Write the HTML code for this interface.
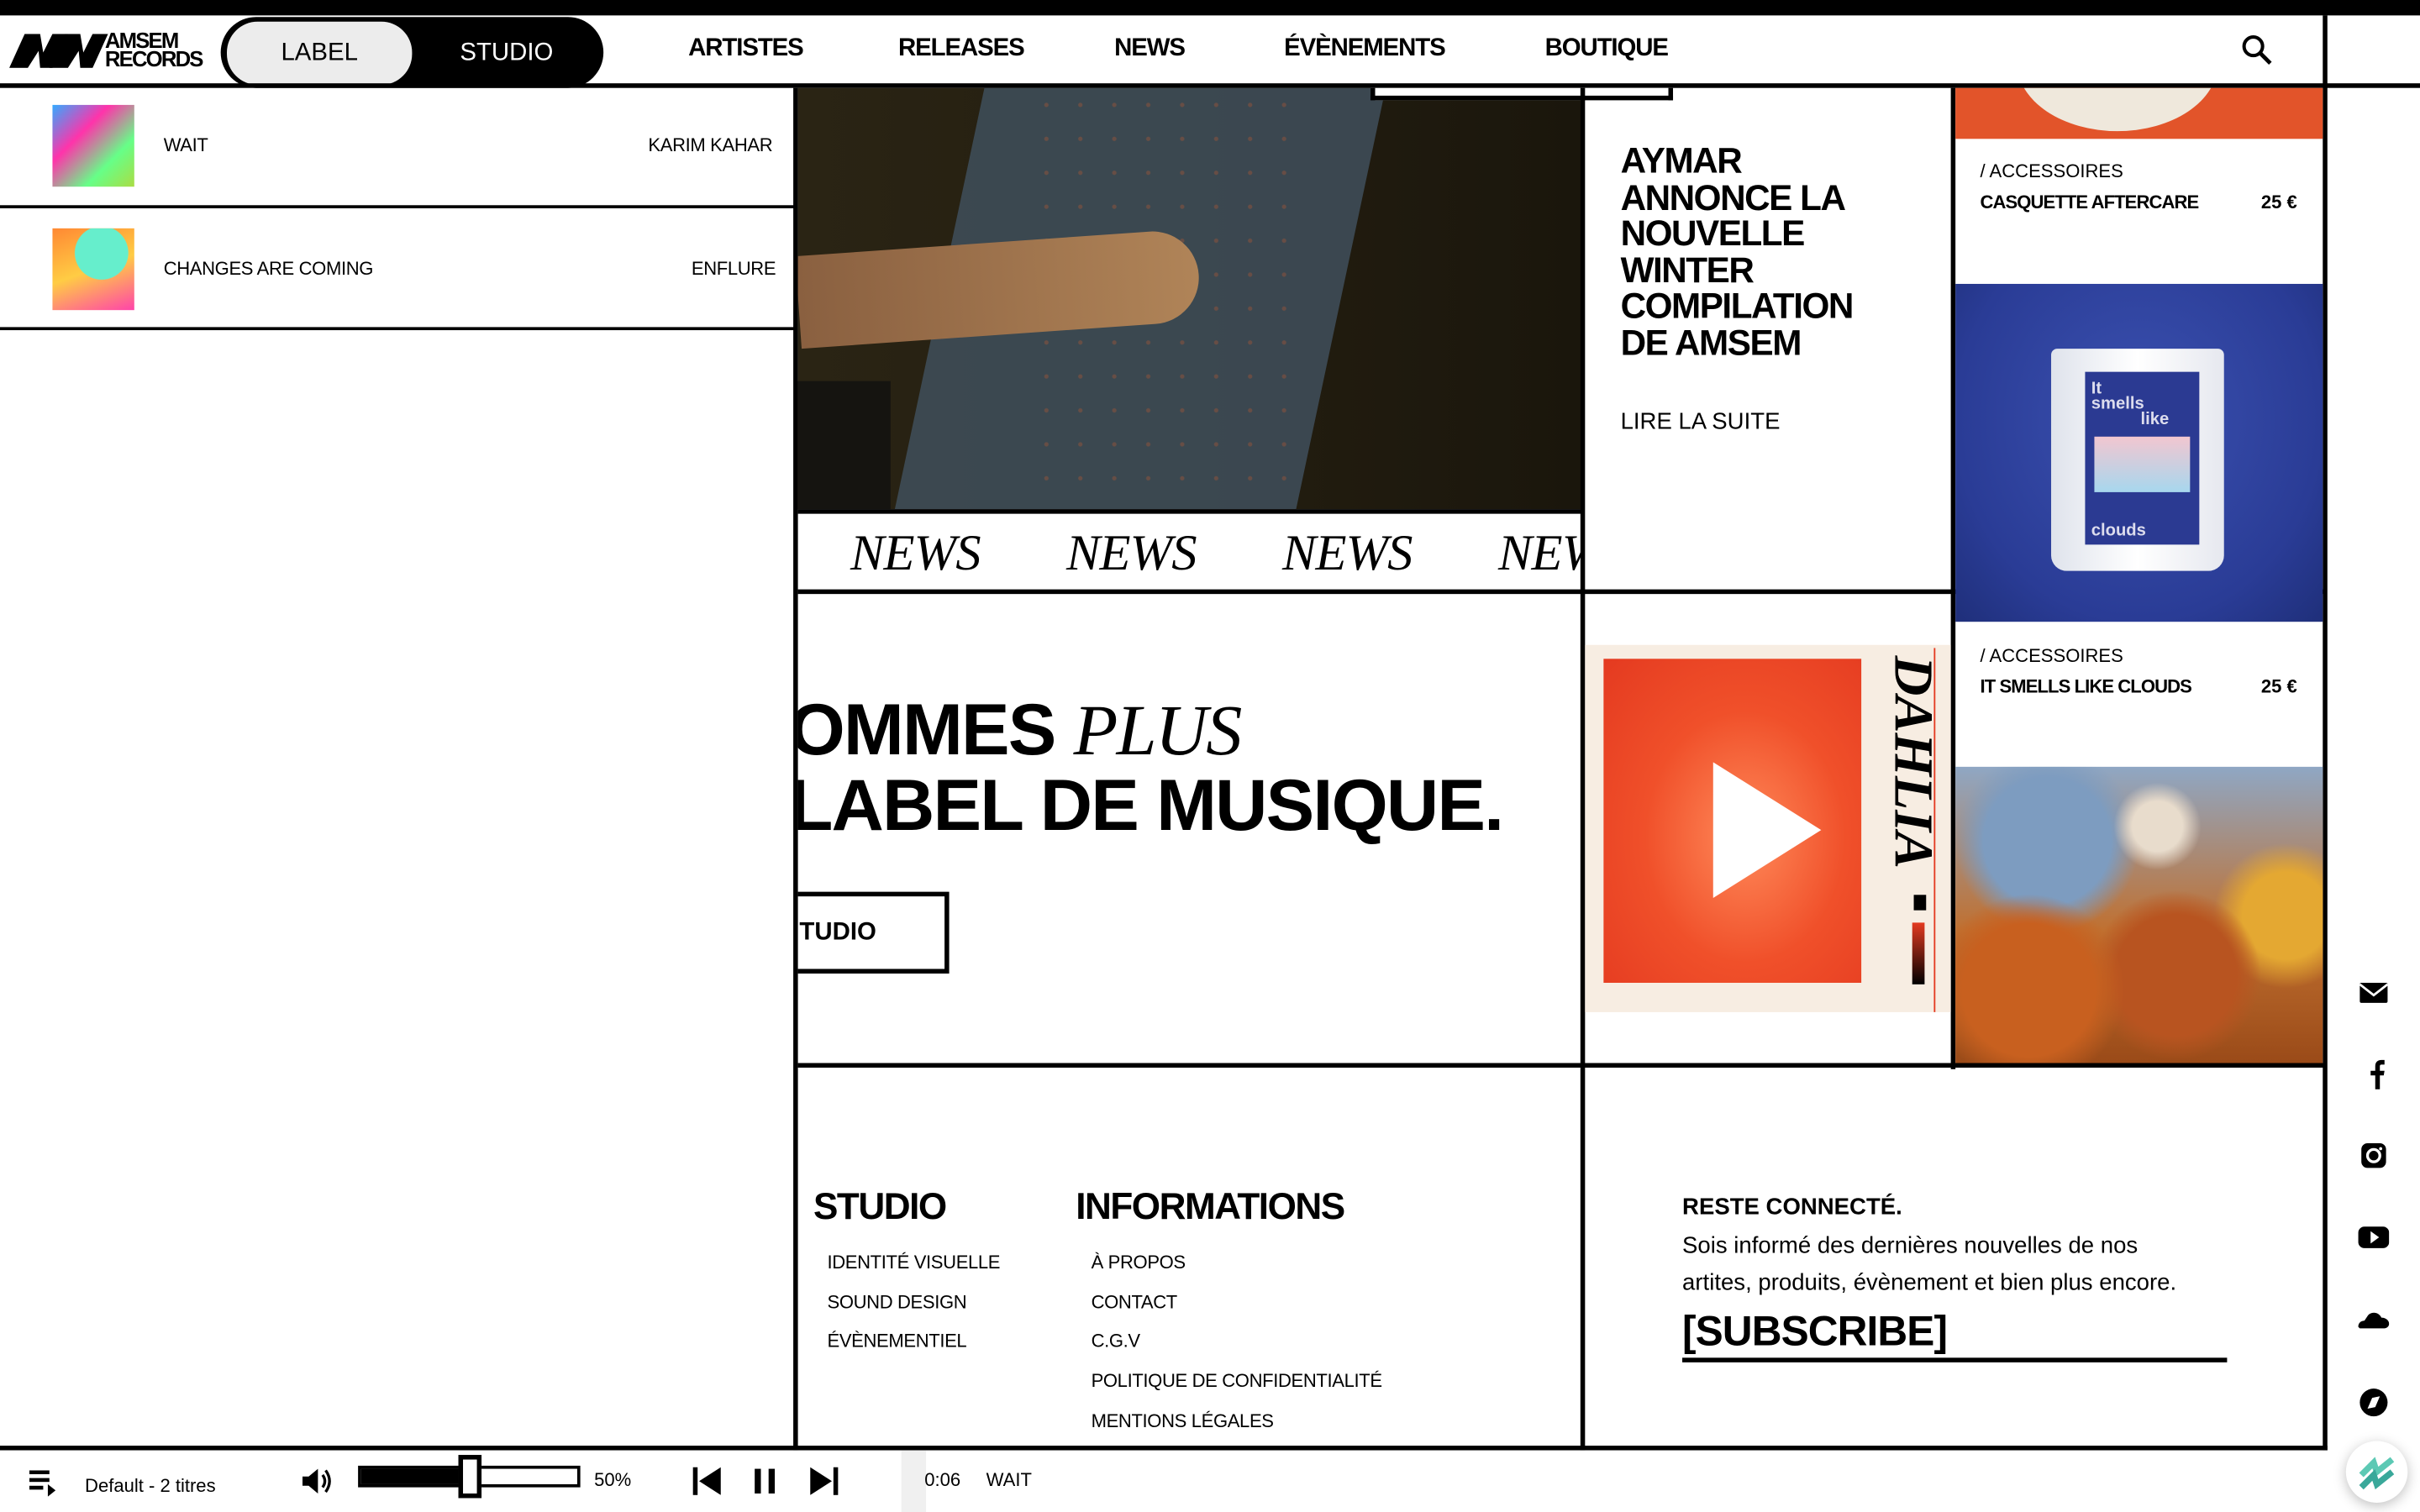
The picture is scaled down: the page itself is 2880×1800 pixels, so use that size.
<!DOCTYPE html>
<html><head><meta charset="utf-8"><style>
*{margin:0;padding:0;box-sizing:border-box}
html,body{width:2880px;height:1800px;overflow:hidden;background:#fff}
#s{position:absolute;left:0;top:0;width:1568px;height:980px;transform:scale(1.836735);transform-origin:0 0;font-family:"Liberation Sans",sans-serif;color:#000}
.a{position:absolute}
.nav{font-weight:bold;font-size:16px;top:23px;letter-spacing:-0.6px}
.k{background:#000}
.t{font-size:12px;letter-spacing:-0.2px}
.fl{font-size:12px;position:absolute;letter-spacing:-0.2px}
</style></head><body><div id="s">
<div class="a k" style="left:0;top:0;width:1568px;height:10px"></div>
<!-- header -->
<svg class="a" style="left:6px;top:22px" width="64" height="22" viewBox="0 0 64 22"><path d="M0 22L10 0H20L22 12L28 0H38L28 22H20L19 11L12 22Z"/><path d="M26 22L36 0H46L48 12L54 0H64L54 22H46L45 11L38 22Z"/></svg>
<div class="a" style="left:68px;top:20px;font-weight:bold;font-size:14px;line-height:12px;letter-spacing:-1px">AMSEM<br>RECORDS</div>
<div class="a k" style="left:143px;top:11px;width:248px;height:46px;border-radius:23px"></div>
<div class="a" style="left:147px;top:14px;width:120px;height:41px;border-radius:20px;background:#ececec;text-align:center;line-height:42px;font-size:16px">LABEL</div>
<div class="a" style="left:298px;top:26px;color:#fff;font-size:16px">STUDIO</div>
<div class="a nav" style="left:446px">ARTISTES</div>
<div class="a nav" style="left:582px">RELEASES</div>
<div class="a nav" style="left:722px">NEWS</div>
<div class="a nav" style="left:832px">ÉVÈNEMENTS</div>
<div class="a nav" style="left:1001px">BOUTIQUE</div>
<svg class="a" style="left:1452px;top:22px" width="22" height="22" viewBox="0 0 22 22"><circle cx="8" cy="8" r="6" fill="none" stroke="#000" stroke-width="2.2"/><path d="M12.5 12.5L19 19" stroke="#000" stroke-width="2.6"/></svg>
<div class="a k" style="left:0;top:54px;width:1568px;height:3px"></div>
<div class="a k" style="left:1505px;top:10px;width:3px;height:930px"></div>
<!-- left list -->
<div class="a" style="left:34px;top:68px;width:53px;height:53px;background:linear-gradient(135deg,#3af 0%,#f3a 35%,#6f8 70%,#ad4 100%)"></div>
<div class="a t" style="left:106px;top:87px">WAIT</div>
<div class="a t" style="left:420px;top:87px">KARIM KAHAR</div>
<div class="a k" style="left:0;top:133px;width:515px;height:2px"></div>
<div class="a" style="left:34px;top:148px;width:53px;height:53px;background:radial-gradient(circle at 60% 30%,#6ec 0 35%,transparent 36%),linear-gradient(160deg,#f83,#fc4 50%,#f4a)"></div>
<div class="a t" style="left:106px;top:167px">CHANGES ARE COMING</div>
<div class="a t" style="left:448px;top:167px">ENFLURE</div>
<div class="a k" style="left:0;top:212px;width:515px;height:2px"></div>
<div class="a k" style="left:514px;top:57px;width:3px;height:883px"></div>
<!-- photo -->
<div class="a" style="left:517px;top:57px;width:508px;height:273px;overflow:hidden;background:linear-gradient(90deg,#2a2414,#241e10 50%,#1a160c)">
<div class="a" style="left:90px;top:-20px;width:260px;height:330px;background:#3e4c58;transform:skewX(-12deg);opacity:.9"></div>
<div class="a" style="left:150px;top:0;width:180px;height:280px;background:radial-gradient(circle,#7a5040 0 8%,transparent 10%) 0 0/22px 22px;opacity:.7"></div>
<div class="a" style="left:0;top:100px;width:260px;height:60px;background:linear-gradient(90deg,#8a6040,#b08458);border-radius:0 30px 30px 0;transform:rotate(-4deg)"></div>
<div class="a" style="left:0;top:190px;width:60px;height:83px;background:#151410"></div>
</div>
<div class="a" style="left:888px;top:57px;width:196px;height:8px;border:3px solid #000;border-top:none;background:#fff"></div>
<div class="a k" style="left:517px;top:330px;width:508px;height:3px"></div>
<div class="a" style="left:517px;top:333px;width:508px;height:50px;overflow:hidden;font-family:'Liberation Serif',serif;font-style:italic;font-size:33px;line-height:52px;white-space:nowrap;letter-spacing:-0.5px;padding-left:34px;word-spacing:48px">NEWS NEWS NEWS NEWS</div>
<div class="a k" style="left:517px;top:382px;width:990px;height:3px"></div>
<div class="a k" style="left:1024px;top:57px;width:3px;height:883px"></div>
<!-- article -->
<div class="a" style="left:1050px;top:93px;font-weight:bold;font-size:23px;line-height:23.5px;letter-spacing:-0.8px">AYMAR<br>ANNONCE LA<br>NOUVELLE<br>WINTER<br>COMPILATION<br>DE AMSEM</div>
<div class="a" style="left:1050px;top:265px;font-size:15px">LIRE LA SUITE</div>
<div class="a k" style="left:1264px;top:57px;width:3px;height:636px"></div>
<!-- shop -->
<div class="a" style="left:1267px;top:57px;width:238px;height:33px;background:#e2542a;overflow:hidden"><div style="position:absolute;left:40px;top:-60px;width:130px;height:88px;border-radius:50%;background:#efe8dc"></div></div>
<div class="a" style="left:1283px;top:104px;font-size:12px">/ ACCESSOIRES</div>
<div class="a" style="left:1283px;top:124px;font-size:12px;font-weight:bold;letter-spacing:-0.5px">CASQUETTE AFTERCARE</div>
<div class="a" style="left:1465px;top:124px;font-size:12px;font-weight:bold">25 €</div>
<div class="a" style="left:1267px;top:184px;width:238px;height:219px;background:radial-gradient(ellipse at 50% 40%,#3b51b0,#2a3c96 70%,#1f2f7a)"></div>
<div class="a" style="left:1329px;top:226px;width:112px;height:144px;background:linear-gradient(90deg,#dfe3ec,#fff 50%,#e6e8ef);border-radius:4px 4px 10px 10px"></div>
<div class="a" style="left:1351px;top:241px;width:74px;height:112px;background:#2b3a92;color:#dde;font-size:11px;font-weight:bold;line-height:10px;padding:6px 4px">It<br>smells<br><span style="padding-left:32px">like</span><div style="margin:6px 2px;height:36px;background:linear-gradient(#f2c6d0,#a7d7ee)"></div><div style="margin-top:20px">clouds</div></div>
<div class="a" style="left:1283px;top:418px;font-size:12px">/ ACCESSOIRES</div>
<div class="a" style="left:1283px;top:438px;font-size:12px;font-weight:bold;letter-spacing:-0.5px">IT SMELLS LIKE CLOUDS</div>
<div class="a" style="left:1465px;top:438px;font-size:12px;font-weight:bold">25 €</div>
<div class="a" style="left:1267px;top:497px;width:238px;height:193px;background:radial-gradient(circle at 20% 75%,#c8601f 0 18%,transparent 26%),radial-gradient(circle at 60% 70%,#b85420 0 20%,transparent 28%),radial-gradient(circle at 90% 50%,#e4a832 0 12%,transparent 20%),radial-gradient(circle at 55% 20%,#e8dccc 0 8%,transparent 14%),radial-gradient(circle at 25% 25%,#7d9cc0 0 18%,transparent 26%),linear-gradient(#8fa7c4,#c07030 55%,#9a4a18)"></div>
<!-- hero -->
<div class="a" style="left:517px;top:385px;width:507px;height:305px;overflow:hidden">
<div class="a" style="left:-6px;top:64px;font-weight:bold;font-size:47px;line-height:48px;white-space:nowrap;letter-spacing:-1px">OMMES <span style="font-family:'Liberation Serif',serif;font-style:italic;font-weight:normal">PLUS</span><br>LABEL DE MUSIQUE.</div>
<div class="a" style="left:-10px;top:193px;width:108px;height:53px;border:3px solid #000;font-weight:bold;font-size:16px;line-height:47px;padding-left:8px">TUDIO</div>
</div>
<!-- video -->
<div class="a" style="left:1027px;top:418px;width:237px;height:238px;background:#f7ede2"></div>
<div class="a" style="left:1039px;top:427px;width:167px;height:210px;background:radial-gradient(ellipse at 55% 55%,#ff8a5a,#f0502a 50%,#e43a20)"></div>
<svg class="a" style="left:1108px;top:492px" width="74" height="92"><path d="M2 2L72 46L2 90Z" fill="#fff"/></svg>
<div class="a" style="left:1222px;top:425px;writing-mode:vertical-rl;font-family:'Liberation Serif',serif;font-weight:bold;font-style:italic;font-size:36px;line-height:36px">DAHLIA</div>
<div class="a" style="left:1240px;top:580px;width:8px;height:10px;background:#000"></div>
<div class="a" style="left:1239px;top:598px;width:8px;height:40px;background:linear-gradient(#e43a20,#000)"></div>
<div class="a" style="left:1253px;top:420px;width:1px;height:236px;background:#e43a20"></div>
<div class="a k" style="left:517px;top:689px;width:990px;height:3px"></div>
<!-- footer -->
<div class="a" style="left:527px;top:769px;font-weight:bold;font-size:24px;letter-spacing:-0.8px">STUDIO</div>
<div class="fl" style="left:536px;top:811px">IDENTITÉ VISUELLE</div>
<div class="fl" style="left:536px;top:837px">SOUND DESIGN</div>
<div class="fl" style="left:536px;top:862px">ÉVÈNEMENTIEL</div>
<div class="a" style="left:697px;top:769px;font-weight:bold;font-size:24px;letter-spacing:-0.8px">INFORMATIONS</div>
<div class="fl" style="left:707px;top:811px">À PROPOS</div>
<div class="fl" style="left:707px;top:837px">CONTACT</div>
<div class="fl" style="left:707px;top:862px">C.G.V</div>
<div class="fl" style="left:707px;top:888px">POLITIQUE DE CONFIDENTIALITÉ</div>
<div class="fl" style="left:707px;top:914px">MENTIONS LÉGALES</div>
<div class="a" style="left:1090px;top:774px;font-weight:bold;font-size:15px">RESTE CONNECTÉ.</div>
<div class="a" style="left:1090px;top:796px;font-size:15px;line-height:24px">Sois informé des dernières nouvelles de nos<br>artites, produits, évènement et bien plus encore.</div>
<div class="a" style="left:1090px;top:848px;font-weight:bold;font-size:27px;letter-spacing:-0.5px">[SUBSCRIBE]</div>
<div class="a k" style="left:1090px;top:880px;width:353px;height:3px"></div>
<!-- social -->
<svg class="a" style="left:1528px;top:634px" width="20" height="300" viewBox="0 0 20 300" fill="#000">
<rect x="1" y="3" width="18" height="13" rx="1"/><path d="M1 4L10 11L19 4" stroke="#fff" stroke-width="1.5" fill="none"/>
<path d="M11 72V63H8V60H11V57C11 54 13 53 15 53H17V56H15C14 56 14 57 14 57V60H17L16.5 63H14V72Z"/>
<rect x="2" y="107" width="16" height="16" rx="4"/><circle cx="10" cy="115" r="4" fill="none" stroke="#fff" stroke-width="1.8"/><circle cx="14.5" cy="110.5" r="1" fill="#fff"/>
<rect x="0" y="161" width="20" height="14" rx="4"/><path d="M8 164L13.5 168L8 172Z" fill="#fff"/>
<path d="M0 226C0 222 4 222 4 222L6 219C8 216 13 216 15 220C18 220 20 222 20 224C20 226 18 227 17 227H1Z"/>
<circle cx="10" cy="275" r="9"/><path d="M6 279L9 272L14 271L11 278Z" fill="#fff"/>
</svg>
<!-- player -->
<div class="a k" style="left:0;top:937px;width:1508px;height:3px"></div>
<div class="a" style="left:584px;top:940px;width:16px;height:40px;background:#f0f0f0"></div>
<svg class="a" style="left:19px;top:953px" width="18" height="18"><rect x="0" y="0" width="13" height="2.5"/><rect x="0" y="5" width="13" height="2.5"/><rect x="0" y="10" width="9" height="2.5"/><path d="M12 9L17 13L12 17Z"/></svg>
<div class="a" style="left:55px;top:956px;font-size:12px">Default - 2 titres</div>
<svg class="a" style="left:195px;top:950px" width="22" height="20"><path d="M1 7H5L11 2V18L5 13H1Z"/><path d="M14 6Q17 10 14 14M16 3Q21 10 16 17" stroke="#000" stroke-width="1.8" fill="none"/></svg>
<div class="a" style="left:232px;top:950px;width:144px;height:14px;border:2px solid #000;background:linear-gradient(90deg,#000 50%,#fff 50%)"></div>
<div class="a" style="left:297px;top:943px;width:15px;height:28px;background:#fff;border:3px solid #000"></div>
<div class="a" style="left:385px;top:952px;font-size:12px">50%</div>
<svg class="a" style="left:448px;top:950px" width="100" height="20"><rect x="1" y="1" width="3" height="18"/><path d="M19 1V19L5 10Z"/><rect x="41" y="2" width="4" height="16"/><rect x="50" y="2" width="4" height="16"/><path d="M77 1V19L91 10Z"/><rect x="92" y="1" width="3" height="18"/></svg>
<div class="a" style="left:599px;top:952px;font-size:12px">0:06</div>
<div class="a" style="left:639px;top:952px;font-size:12px">WAIT</div>
<div class="a" style="left:1520px;top:934px;width:40px;height:40px;border-radius:50%;background:#fff;box-shadow:0 2px 8px rgba(0,0,0,.25)"></div>
<svg class="a" style="left:1526px;top:940px" width="28" height="28"><path d="M4 16L12 8L14 14L24 6" stroke="#5cc9b4" stroke-width="4" fill="none"/><path d="M4 24L12 16L14 22L24 14" stroke="#3aa89a" stroke-width="4" fill="none"/></svg>
</div></body></html>
